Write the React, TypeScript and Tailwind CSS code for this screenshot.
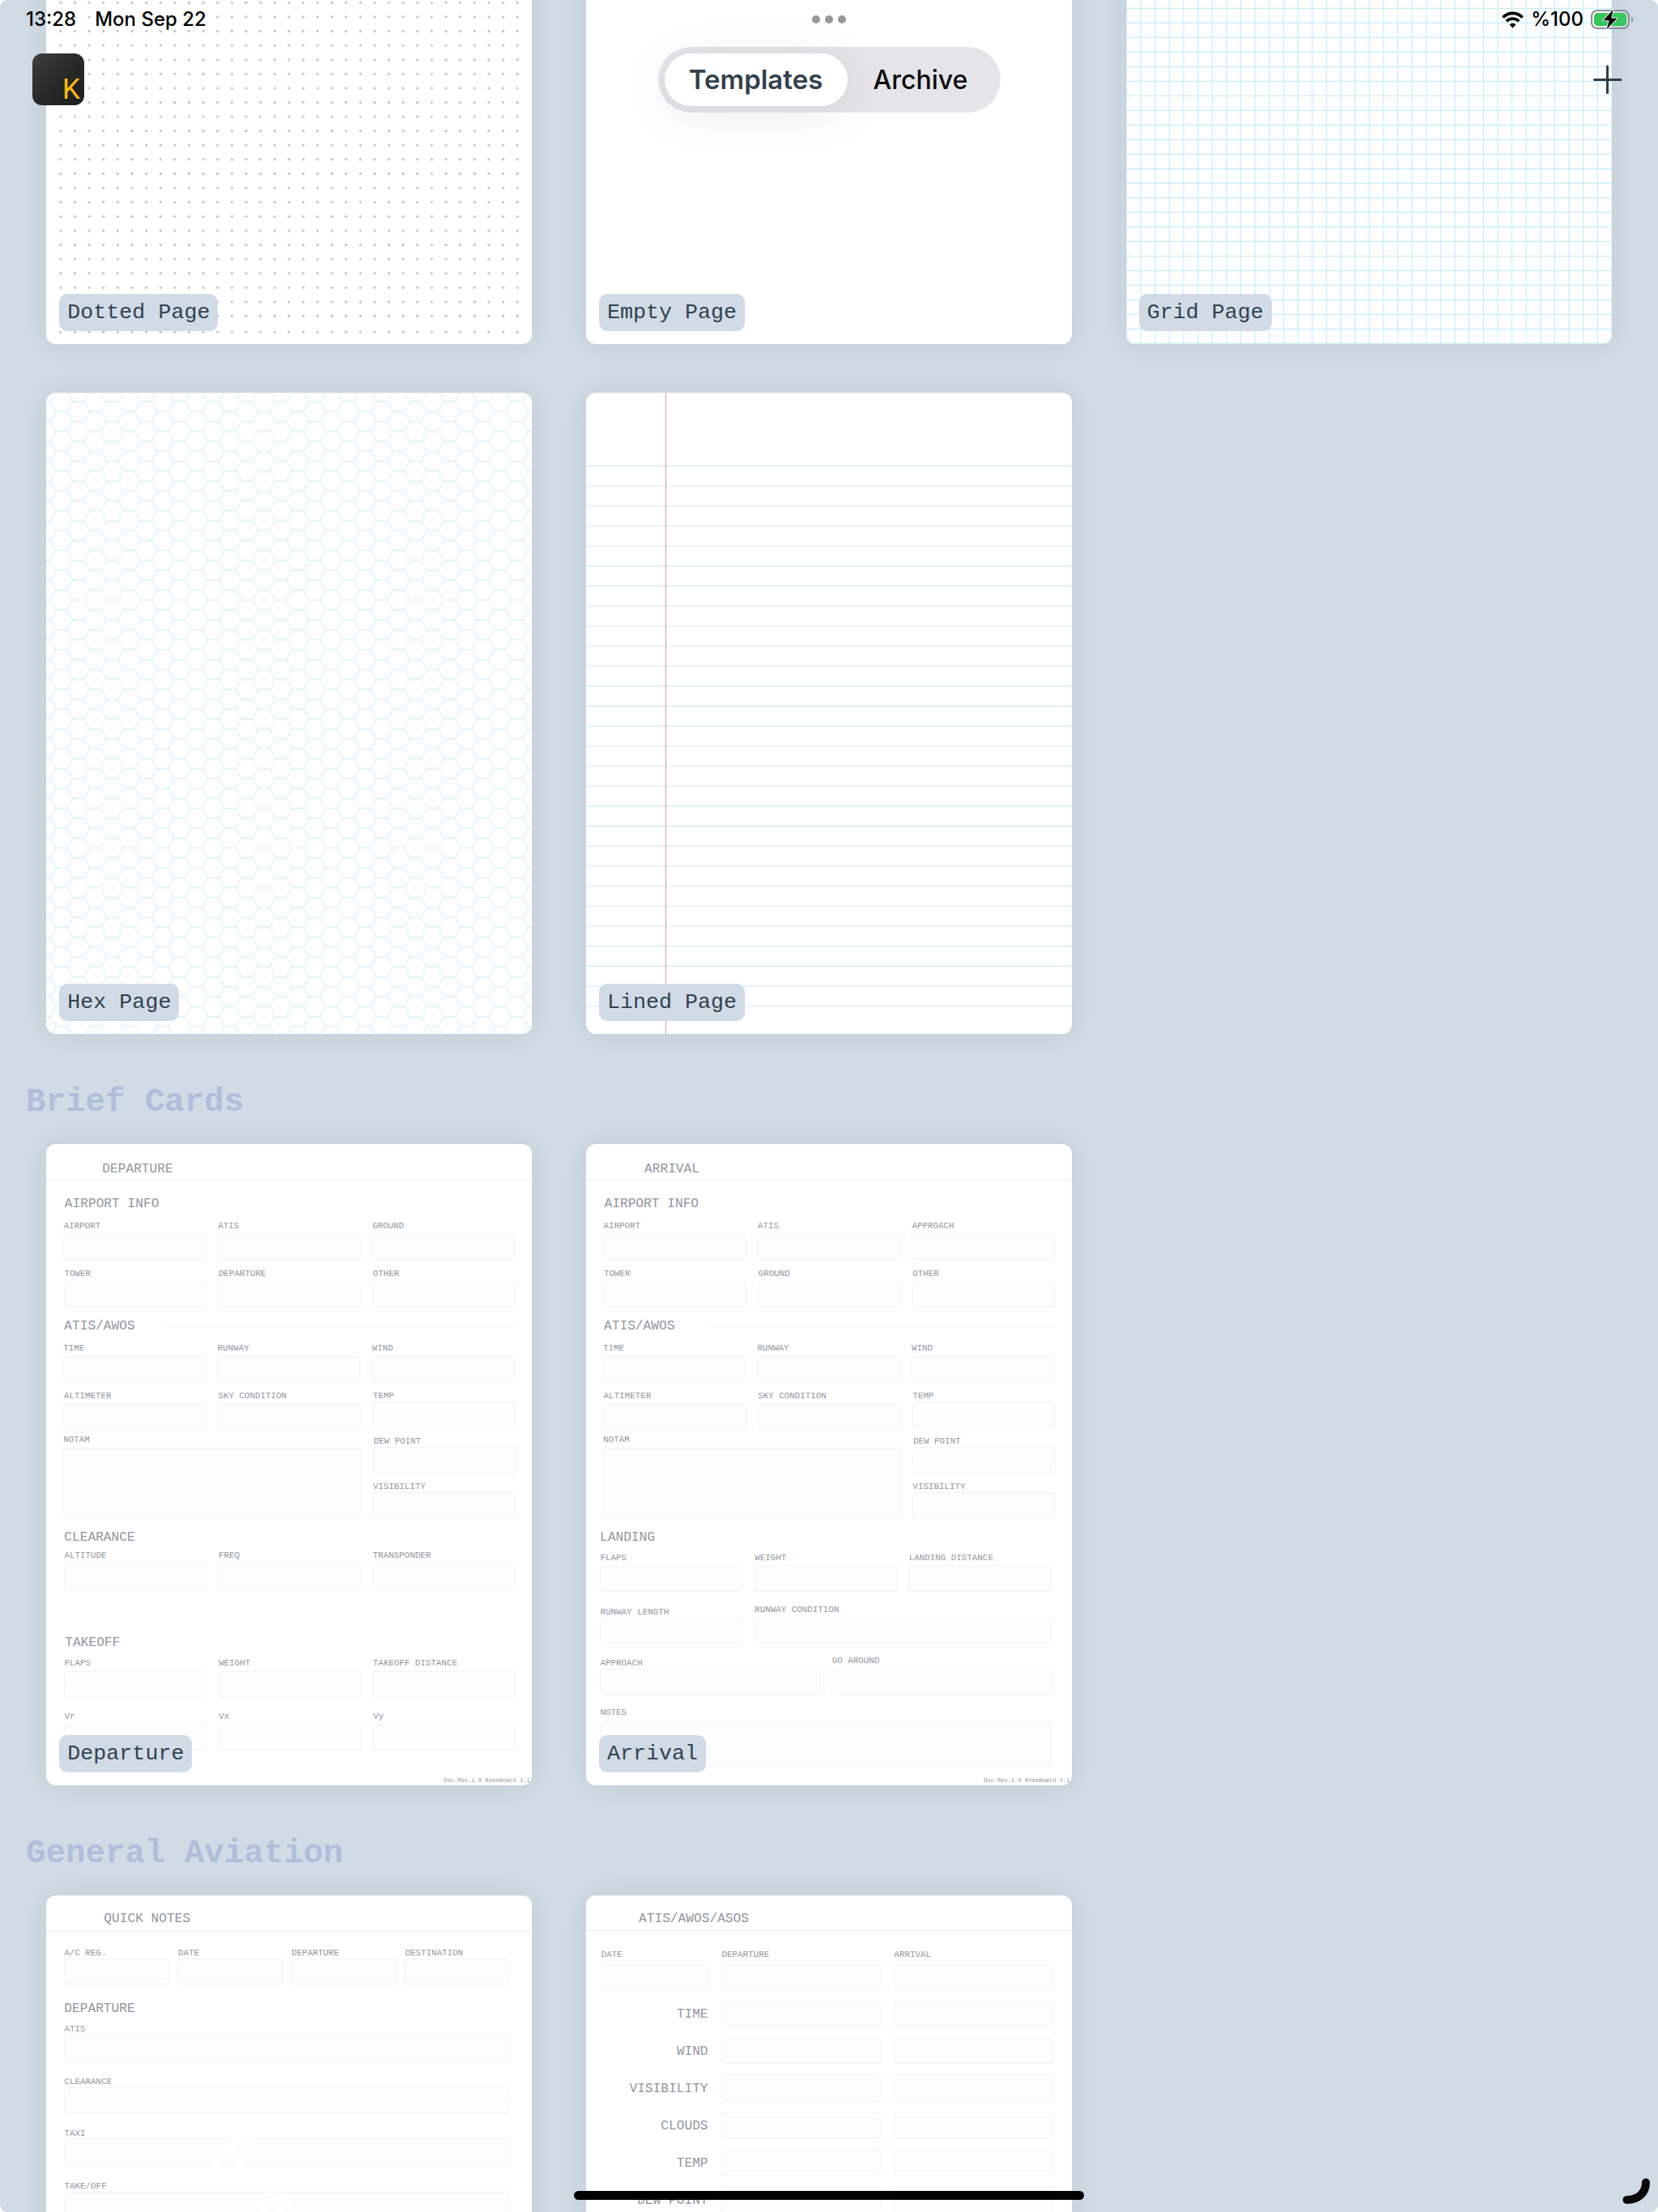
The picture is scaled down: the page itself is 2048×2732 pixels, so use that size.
import type { ReactNode } from "react";

const BOX = "rounded-[3px] border border-[#f3f3f5] bg-[#fdfdfd]";

function range(count: number) {
  return Array.from({ length: count }, (_, i) => i);
}

/* ---------- paper patterns ---------- */

function DottedPaper() {
  const rows = [...range(43).map((k) => 18.3 + 17.6 * k), 777.3];
  return (
    <svg className="block h-full w-full" viewBox="0 0 600 792">
      {rows.map((y) =>
        range(33).map((k) => <circle key={`${y}-${k}`} cx={17.9 + 17.63 * k} cy={y} r="1.65" fill="#c8c8cb" />),
      )}
    </svg>
  );
}

function GridPaper() {
  return (
    <svg className="block h-full w-full" viewBox="0 0 600 792" stroke="#c6eefc" strokeWidth="1.2">
      {range(35).map((k) => (
        <line key={`v${k}`} x1={0.6 + 17.63 * k} x2={0.6 + 17.63 * k} y1="0" y2="792" />
      ))}
      {range(44).map((k) => (
        <line key={`h${k}`} x1="0" x2="600" y1={791.4 - 18 * k} y2={791.4 - 18 * k} />
      ))}
    </svg>
  );
}

function HexPaper() {
  return (
    <svg className="block h-full w-full" viewBox="0 0 600 792">
      <defs>
        <pattern id="hex" width="41.65" height="24.5" patternUnits="userSpaceOnUse" patternTransform="translate(19.1 17.3)">
          <path
            d="M0 6H6.95L13.9 18.25H27.8L34.7 6H41.65M13.9 18.25L10.4 24.5M27.8 18.25L31.2 24.5M6.95 6L10.35 0M34.7 6L31.3 0"
            fill="none"
            stroke="#d3f0fb"
            strokeWidth="1"
          />
        </pattern>
      </defs>
      <rect width="600" height="792" fill="url(#hex)" />
    </svg>
  );
}

function LinedPaper() {
  return (
    <svg className="block h-full w-full" viewBox="0 0 600 792">
      {range(28).map((k) => (
        <line key={k} x1="0" x2="600" y1={90.6 + 24.71 * k} y2={90.6 + 24.71 * k} stroke="#cdedfa" strokeWidth="1.1" />
      ))}
      <line x1="98.5" x2="98.5" y1="0" y2="792" stroke="#df9aa4" strokeWidth="1" />
    </svg>
  );
}

/* ---------- form building blocks ---------- */

function FormHeader({ className, children }: { className: string; children: ReactNode }) {
  return <div className={`flex shrink-0 items-center border-b border-[#ececef] text-[16.2px] ${className}`}>{children}</div>;
}

function Heading({ className, children }: { className: string; children: ReactNode }) {
  return <div className={`h-5 shrink-0 text-[16.2px] leading-5 ${className}`}>{children}</div>;
}

type FieldProps = { label: string; tight?: boolean; className?: string; box?: string };

function Field({ label, tight, className = "w-[177px]", box = "h-8" }: FieldProps) {
  return (
    <div className={`shrink-0 ${className}`}>
      <div className={`whitespace-nowrap pl-[0.6px] text-[10.85px] ${tight ? "h-3.5 leading-[14px]" : "h-5 leading-5"}`}>{label}</div>
      <div className={`${BOX} ${box}`} />
    </div>
  );
}

function FieldRow({ labels, className }: { labels: string[]; className: string }) {
  return (
    <div className={`flex shrink-0 gap-[13.6px] ${className}`}>
      {labels.map((l) => (
        <Field key={l} label={l} />
      ))}
    </div>
  );
}

function Revision() {
  return <div className="mt-auto h-[11px] shrink-0 whitespace-nowrap pl-[491px] text-[7.1px] leading-[11px]">Doc.Rev.1.0 KneeBoard 1.1</div>;
}

function WeatherBlock() {
  return (
    <>
      <div className="mt-[13px] flex h-5 shrink-0 items-center pl-[22px] pr-5">
        <div className="w-[126px] text-[16.2px] leading-5">ATIS/AWOS</div>
        <div className="h-px flex-1 bg-[#f4f4f6]" />
      </div>
      <FieldRow labels={["TIME", "RUNWAY", "WIND"]} className="ml-[20.3px] mt-[7px]" />
      <div className="ml-[21px] mt-[7px] flex shrink-0 gap-[13.6px]">
        <div className="flex flex-col gap-0.5">
          <FieldRow labels={["ALTIMETER", "SKY CONDITION"]} className="" />
          <Field label="NOTAM" className="-ml-[0.7px] w-[369px]" box="h-[87px]" />
        </div>
        <div className="mt-[3px] flex flex-col gap-2.5">
          <Field label="TEMP" tight />
          <Field label="DEW POINT" tight className="ml-[0.6px] w-[177px]" />
          <Field label="VISIBILITY" tight />
        </div>
      </div>
    </>
  );
}

function DepartureForm() {
  return (
    <div className="flex h-full flex-col">
      <FormHeader className="h-[45px] pl-[69px] pt-[18px]">DEPARTURE</FormHeader>
      <Heading className="mt-[19px] pl-[22.5px]">AIRPORT INFO</Heading>
      <FieldRow labels={["AIRPORT", "ATIS", "GROUND"]} className="ml-[20.8px] mt-[7px]" />
      <FieldRow labels={["TOWER", "DEPARTURE", "OTHER"]} className="ml-[21.5px] mt-[7px]" />
      <WeatherBlock />
      <Heading className="mt-3.5 pl-[22px]">CLEARANCE</Heading>
      <FieldRow labels={["ALTITUDE", "FREQ", "TRANSPONDER"]} className="ml-[21.5px] mt-0.5" />
      <Heading className="mt-14 pl-[23px]">TAKEOFF</Heading>
      <FieldRow labels={["FLAPS", "WEIGHT", "TAKEOFF DISTANCE"]} className="ml-[21.7px] mt-[5px]" />
      <FieldRow labels={["Vr", "Vx", "Vy"]} className="ml-[21.8px] mt-3.5" />
      <Revision />
    </div>
  );
}

function ArrivalForm() {
  return (
    <div className="flex h-full flex-col">
      <FormHeader className="h-[45px] pl-[72px] pt-[18px]">ARRIVAL</FormHeader>
      <Heading className="mt-[19px] pl-[22.5px]">AIRPORT INFO</Heading>
      <FieldRow labels={["AIRPORT", "ATIS", "APPROACH"]} className="ml-[20.8px] mt-[7px]" />
      <FieldRow labels={["TOWER", "GROUND", "OTHER"]} className="ml-[21.5px] mt-[7px]" />
      <WeatherBlock />
      <Heading className="mt-3.5 pl-[17px]">LANDING</Heading>
      <FieldRow labels={["FLAPS", "WEIGHT", "LANDING DISTANCE"]} className="ml-[17px] mt-[5px]" />
      <div className="ml-[17px] mt-3 flex shrink-0 items-end gap-[13.6px]">
        <Field label="RUNWAY LENGTH" tight />
        <Field label="RUNWAY CONDITION" className="w-[367.5px]" />
      </div>
      <div className="ml-[17px] mt-[11px] flex shrink-0 items-end gap-[13.6px]">
        <Field label="APPROACH" tight className="w-[272.5px]" />
        <Field label="GO AROUND" className="w-[272.5px]" />
      </div>
      <Field label="NOTES" className="ml-[17px] mt-3 w-[558.5px]" box="h-[58px]" />
      <Revision />
    </div>
  );
}

function QuickNotesForm() {
  return (
    <div className="relative flex h-full flex-col">
      <FormHeader className="h-[45px] pl-[71px] pt-[15px]">QUICK NOTES</FormHeader>
      <div className="ml-[21.7px] mt-[19px] flex shrink-0 gap-[10.3px]">
        {["A/C REG.", "DATE", "DEPARTURE", "DESTINATION"].map((l) => (
          <Field key={l} label={l} tight className="w-[130px]" />
        ))}
      </div>
      <Heading className="mt-5 pl-[22px]">DEPARTURE</Heading>
      <Field label="ATIS" tight className="ml-[21.7px] mt-2 w-[551px]" />
      <Field label="CLEARANCE" tight className="ml-[21.7px] mt-[19px] w-[551px]" />
      <Field label="TAXI" tight className="ml-[21.7px] mt-[18px] w-[551px]" />
      <Field label="TAKE/OFF" tight className="ml-[21.7px] mt-[19px] w-[551px]" />
      <svg className="absolute left-0 top-0 h-full w-full" viewBox="0 0 600 792" fill="#ffffff" fontFamily="Inter, sans-serif" fontSize="76" fontWeight="500">
        <text transform="translate(196 320) rotate(52)">E</text>
        <text transform="translate(240 380) rotate(58)">A</text>
      </svg>
    </div>
  );
}

function AtisForm() {
  return (
    <div className="flex h-full flex-col">
      <FormHeader className="h-11 pl-[65px] pt-[15px]">ATIS/AWOS/ASOS</FormHeader>
      <div className="ml-[17.6px] mt-4 flex shrink-0 gap-4">
        {[
          { label: "DATE", w: "w-[133px]" },
          { label: "DEPARTURE", w: "w-[197px]" },
          { label: "ARRIVAL", w: "w-[197px]" },
        ].map(({ label, w }) => (
          <div key={label} className={w}>
            <div className="h-[25px] pl-px pt-px text-[10.85px] leading-[25px]">{label}</div>
            <div className={`${BOX} h-8`} />
          </div>
        ))}
      </div>
      <div className="ml-[17.6px] mt-[13px] flex shrink-0 flex-col gap-3.5">
        {["TIME", "WIND", "VISIBILITY", "CLOUDS", "TEMP", "DEW POINT"].map((l) => (
          <div key={l} className="flex h-8 gap-4">
            <div className="w-[133px] pt-px text-right text-[16.2px] leading-8">{l}</div>
            <div className={`${BOX} w-[197px]`} />
            <div className={`${BOX} w-[197px]`} />
          </div>
        ))}
      </div>
    </div>
  );
}

/* ---------- page layout ---------- */

function Card({ name, children }: { name?: string; children: ReactNode }) {
  return (
    <div className="relative h-[792px] w-[600px] rounded-[12px] bg-white shadow-[0_0_40px_rgba(30,20,70,0.075)]">
      <div className="h-full overflow-hidden rounded-[12px] text-[#9096a2]">{children}</div>
      {name && (
        <div className="absolute bottom-4 left-4 flex h-[46px] items-center whitespace-pre rounded-[10px] bg-[#d0dbe6] px-2.5 text-[26.7px] leading-none text-[#33424f]">
          {name}
        </div>
      )}
    </div>
  );
}

function CardRow({ children }: { children: ReactNode }) {
  return <div className="flex gap-[66.7px] pl-[57.3px]">{children}</div>;
}

function SectionTitle({ children }: { children: ReactNode }) {
  return <h2 className="flex h-[136px] items-center pl-[32px] pt-[33px] text-[40.8px] font-bold leading-none text-[#b0bedb]">{children}</h2>;
}

function StatusBar() {
  return (
    <div className="flex h-12 items-center justify-between pl-8 pr-[30px] text-[24px] font-medium text-black">
      <div className="flex gap-[23px]">
        <span>13:28</span>
        <span>Mon Sep 22</span>
      </div>
      <div className="flex items-center">
        <svg className="h-[21px] w-[27px]" viewBox="0 0 27 21" fill="none" stroke="#000" strokeWidth="3.6">
          <path d="M1.4 7.6C8 .6 19 .6 25.6 7.6" />
          <path d="M5.8 12.2C10 7.9 17 7.9 21.2 12.2" />
          <path d="M13.5 20.6L9.6 16.4C11.8 14.3 15.2 14.3 17.4 16.4Z" fill="#000" stroke="none" />
        </svg>
        <span className="ml-[9px]">%100</span>
        <svg className="ml-[9px] h-[26px] w-[53px]" viewBox="0 0 53 26">
          <rect x="1" y="2" width="46" height="22" rx="7" fill="none" stroke="#8a8f94" strokeWidth="2" />
          <path d="M50 9.5C53 10.5 53 15.5 50 16.5Z" fill="#8a8f94" />
          <rect x="4" y="5" width="40" height="16" rx="4.5" fill="#34c759" />
          <path d="M27.8 .8L15.2 14.2H22.6L19.6 25.2L32.6 11.4H25.2Z" fill="#000" stroke="#fff" strokeWidth="1.8" paintOrder="stroke" strokeLinejoin="round" />
        </svg>
      </div>
    </div>
  );
}

function TopBar() {
  return (
    <div className="absolute inset-x-0 top-0 font-[Inter,sans-serif]">
      <StatusBar />
      <div className="grid grid-cols-[1fr_auto_1fr] pl-10 pr-10 pt-2.5">
        <div className="mt-2 flex h-16 w-16 items-end justify-end rounded-[12px] bg-linear-to-br from-[#3e3e3e] via-[#292929] to-[#1e1e1e] pb-[7px] pr-[5px]">
          <span className="font-[Roboto,sans-serif] text-[35px] font-normal leading-[25px] text-[#fdb90e]">K</span>
        </div>
        <div className="flex h-[81px] w-[423px] rounded-full bg-[#e5e4e9] p-2">
          <div className="flex w-[226px] items-center justify-center rounded-full bg-white text-[33px] font-semibold text-[#33404d] shadow-[0_8px_60px_rgba(0,0,0,0.08)]">
            Templates
          </div>
          <div className="flex flex-1 items-center justify-center text-[32px] font-medium text-[#0c0c0e]">Archive</div>
        </div>
        <svg className="mr-1 mt-[22px] h-9 w-9 justify-self-end" viewBox="0 0 36 36" stroke="#2f3e4b" strokeWidth="3" strokeLinecap="round">
          <path d="M17.5 2V35M1.5 18.5H34" />
        </svg>
      </div>
      <div className="absolute left-1/2 top-[19px] flex -translate-x-1/2 gap-1.5">
        <span className="h-2.5 w-2.5 rounded-full bg-[#989898]" />
        <span className="h-2.5 w-2.5 rounded-full bg-[#989898]" />
        <span className="h-2.5 w-2.5 rounded-full bg-[#989898]" />
      </div>
    </div>
  );
}

export default function App() {
  return (
    <div className="h-[2732px] w-[2048px] bg-white">
      <div className="relative h-full w-full overflow-hidden rounded-[9px] bg-[#d0dbe5] font-['Liberation_Mono',monospace]">
        <main className="-mt-[367px]">
          <CardRow>
            <Card name="Dotted Page">
              <DottedPaper />
            </Card>
            <Card name="Empty Page">{null}</Card>
            <Card name="Grid Page">
              <GridPaper />
            </Card>
          </CardRow>
          <div className="h-[60px]" />
          <CardRow>
            <Card name="Hex Page">
              <HexPaper />
            </Card>
            <Card name="Lined Page">
              <LinedPaper />
            </Card>
          </CardRow>
          <SectionTitle>Brief Cards</SectionTitle>
          <CardRow>
            <Card name="Departure">
              <DepartureForm />
            </Card>
            <Card name="Arrival">
              <ArrivalForm />
            </Card>
          </CardRow>
          <SectionTitle>General Aviation</SectionTitle>
          <CardRow>
            <Card>
              <QuickNotesForm />
            </Card>
            <Card>
              <AtisForm />
            </Card>
          </CardRow>
        </main>
        <TopBar />
        <div className="absolute left-[709px] top-[2706px] h-[11px] w-[630px] rounded-full bg-black" />
        <svg className="absolute bottom-0 right-0 h-12 w-12" viewBox="0 0 48 48">
          <path d="M33 11.5C33 25 23 33 9.5 33" fill="none" stroke="#0a0a0a" strokeWidth="10" strokeLinecap="round" />
        </svg>
      </div>
    </div>
  );
}
